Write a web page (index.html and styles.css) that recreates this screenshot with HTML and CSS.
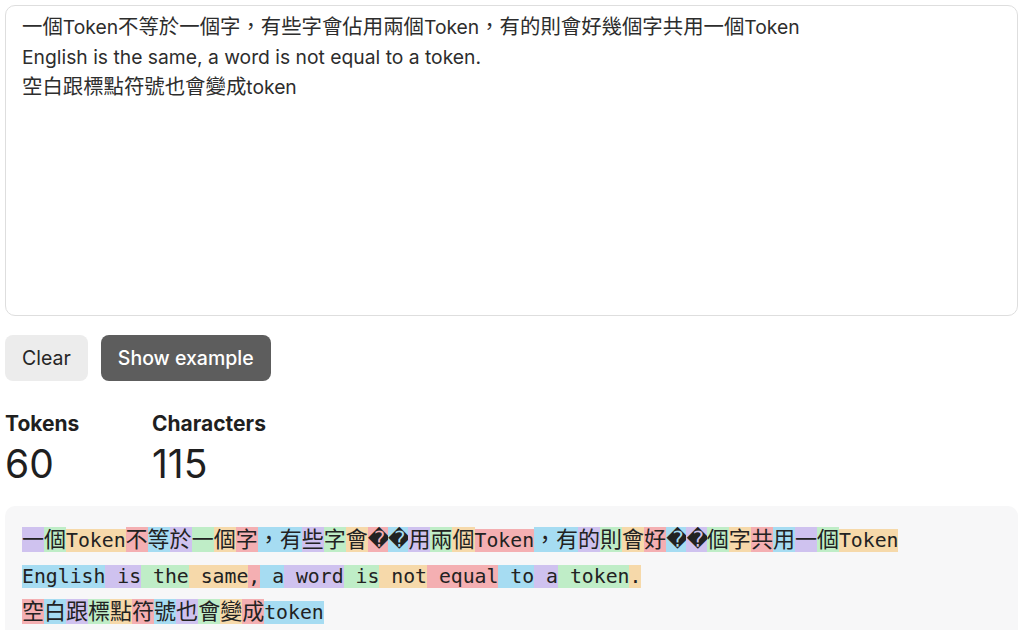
FILE: index.html
```html
<!DOCTYPE html>
<html lang="zh-Hant">
<head>
<meta charset="utf-8">
<title>Tokenizer</title>
<link rel="stylesheet" href="styles.css">
</head>
<body>
<main class="page">
  <div class="input"><span class="zh">一個</span>Token<span class="zh">不等於一個字，有些字會佔用兩個</span>Token<span class="zh">，有的則會好幾個字共用一個</span>Token<br>English is the same, a word is not equal to a token.<br><span class="zh">空白跟標點符號也會變成</span>token</div>
  <div class="actions">
    <button class="btn btn-light">Clear</button>
    <button class="btn btn-dark">Show example</button>
  </div>
  <div class="stats">
    <div class="stat">
      <div class="stat-label">Tokens</div>
      <div class="stat-value">60</div>
    </div>
    <div class="stat">
      <div class="stat-label">Characters</div>
      <div class="stat-value">115</div>
    </div>
  </div>
  <div class="tokens"><span class="t p">一</span><span class="t g">個</span><span class="t o en">Token</span><span class="t r">不</span><span class="t b">等</span><span class="t p">於</span><span class="t g">一</span><span class="t o">個</span><span class="t r">字</span><span class="t b">，有</span><span class="t p">些</span><span class="t g">字</span><span class="t o">會</span><span class="t r rep">�</span><span class="t b rep">�</span><span class="t p">用</span><span class="t g">兩</span><span class="t o">個</span><span class="t r en">Token</span><span class="t b">，有</span><span class="t p">的</span><span class="t g">則</span><span class="t o">會</span><span class="t r">好</span><span class="t b rep">�</span><span class="t p rep">�</span><span class="t g">個</span><span class="t o">字</span><span class="t r">共</span><span class="t b">用</span><span class="t p">一</span><span class="t g">個</span><span class="t o en">Token</span><br>
<span class="t b en">English</span><span class="t p en"> is</span><span class="t g en"> the</span><span class="t o en"> same</span><span class="t r en">,</span><span class="t b en"> a</span><span class="t p en"> word</span><span class="t g en"> is</span><span class="t o en"> not</span><span class="t r en"> equal</span><span class="t b en"> to</span><span class="t p en"> a</span><span class="t g en"> token</span><span class="t o en">.</span><br>
<span class="t r">空</span><span class="t b">白</span><span class="t p">跟</span><span class="t g">標</span><span class="t o">點</span><span class="t r">符</span><span class="t b">號</span><span class="t p">也</span><span class="t g">會</span><span class="t o">變</span><span class="t r">成</span><span class="t b en">token</span></div>
</main>
</body>
</html>
```

FILE: styles.css
```css
* {
  box-sizing: border-box;
}

html, body {
  margin: 0;
  background: #ffffff;
}

.page {
  padding: 5px 6px 0 5px;
  font-family: Inter, "Noto Sans CJK TC", sans-serif;
  color: #2b2b2b;
}

.input {
  height: 311px;
  border: 1px solid #dedede;
  border-radius: 10px;
  padding: 6px 16px;
  font-size: 19.3px;
  line-height: 29.5px;
  color: #2d2d2d;
}

.zh {
  font-size: 20.4px;
}

.actions {
  display: flex;
  gap: 13px;
  margin-top: 19px;
}

.btn {
  height: 46px;
  padding: 0 17px;
  border: none;
  border-radius: 8px;
  font-family: Inter, sans-serif;
  font-size: 19.5px;
}

.btn-light {
  background: #ececec;
  color: #262626;
}

.btn-dark {
  background: #5d5d5d;
  color: #ffffff;
  font-weight: 500;
}

.stats {
  display: flex;
  margin-top: 29px;
}

.stat {
  min-width: 147px;
}

.stat-label {
  font-size: 21px;
  font-weight: 700;
  line-height: 28px;
  color: #1f1f1f;
}

.stat-value {
  margin-top: 3px;
  font-size: 39px;
  line-height: 46px;
  color: #1f1f1f;
}

.tokens {
  margin-top: 19px;
  min-height: 140px;
  background: #f7f7f8;
  border-radius: 10px;
  padding: 16px 17px 14px;
  font-family: "DejaVu Sans Mono", "Noto Sans CJK TC", monospace;
  font-size: 22px;
  line-height: 35px;
  color: #222222;
}

.t.en {
  font-size: 19.8px;
}

.t.rep {
  font-family: "DejaVu Sans", "Noto Sans CJK TC", sans-serif;
  letter-spacing: -2.2px;
}

.p { background: #cfc2ef; }
.g { background: #bfedc7; }
.o { background: #f6d9aa; }
.r { background: #f4afb2; }
.b { background: #a6dcf2; }
```
